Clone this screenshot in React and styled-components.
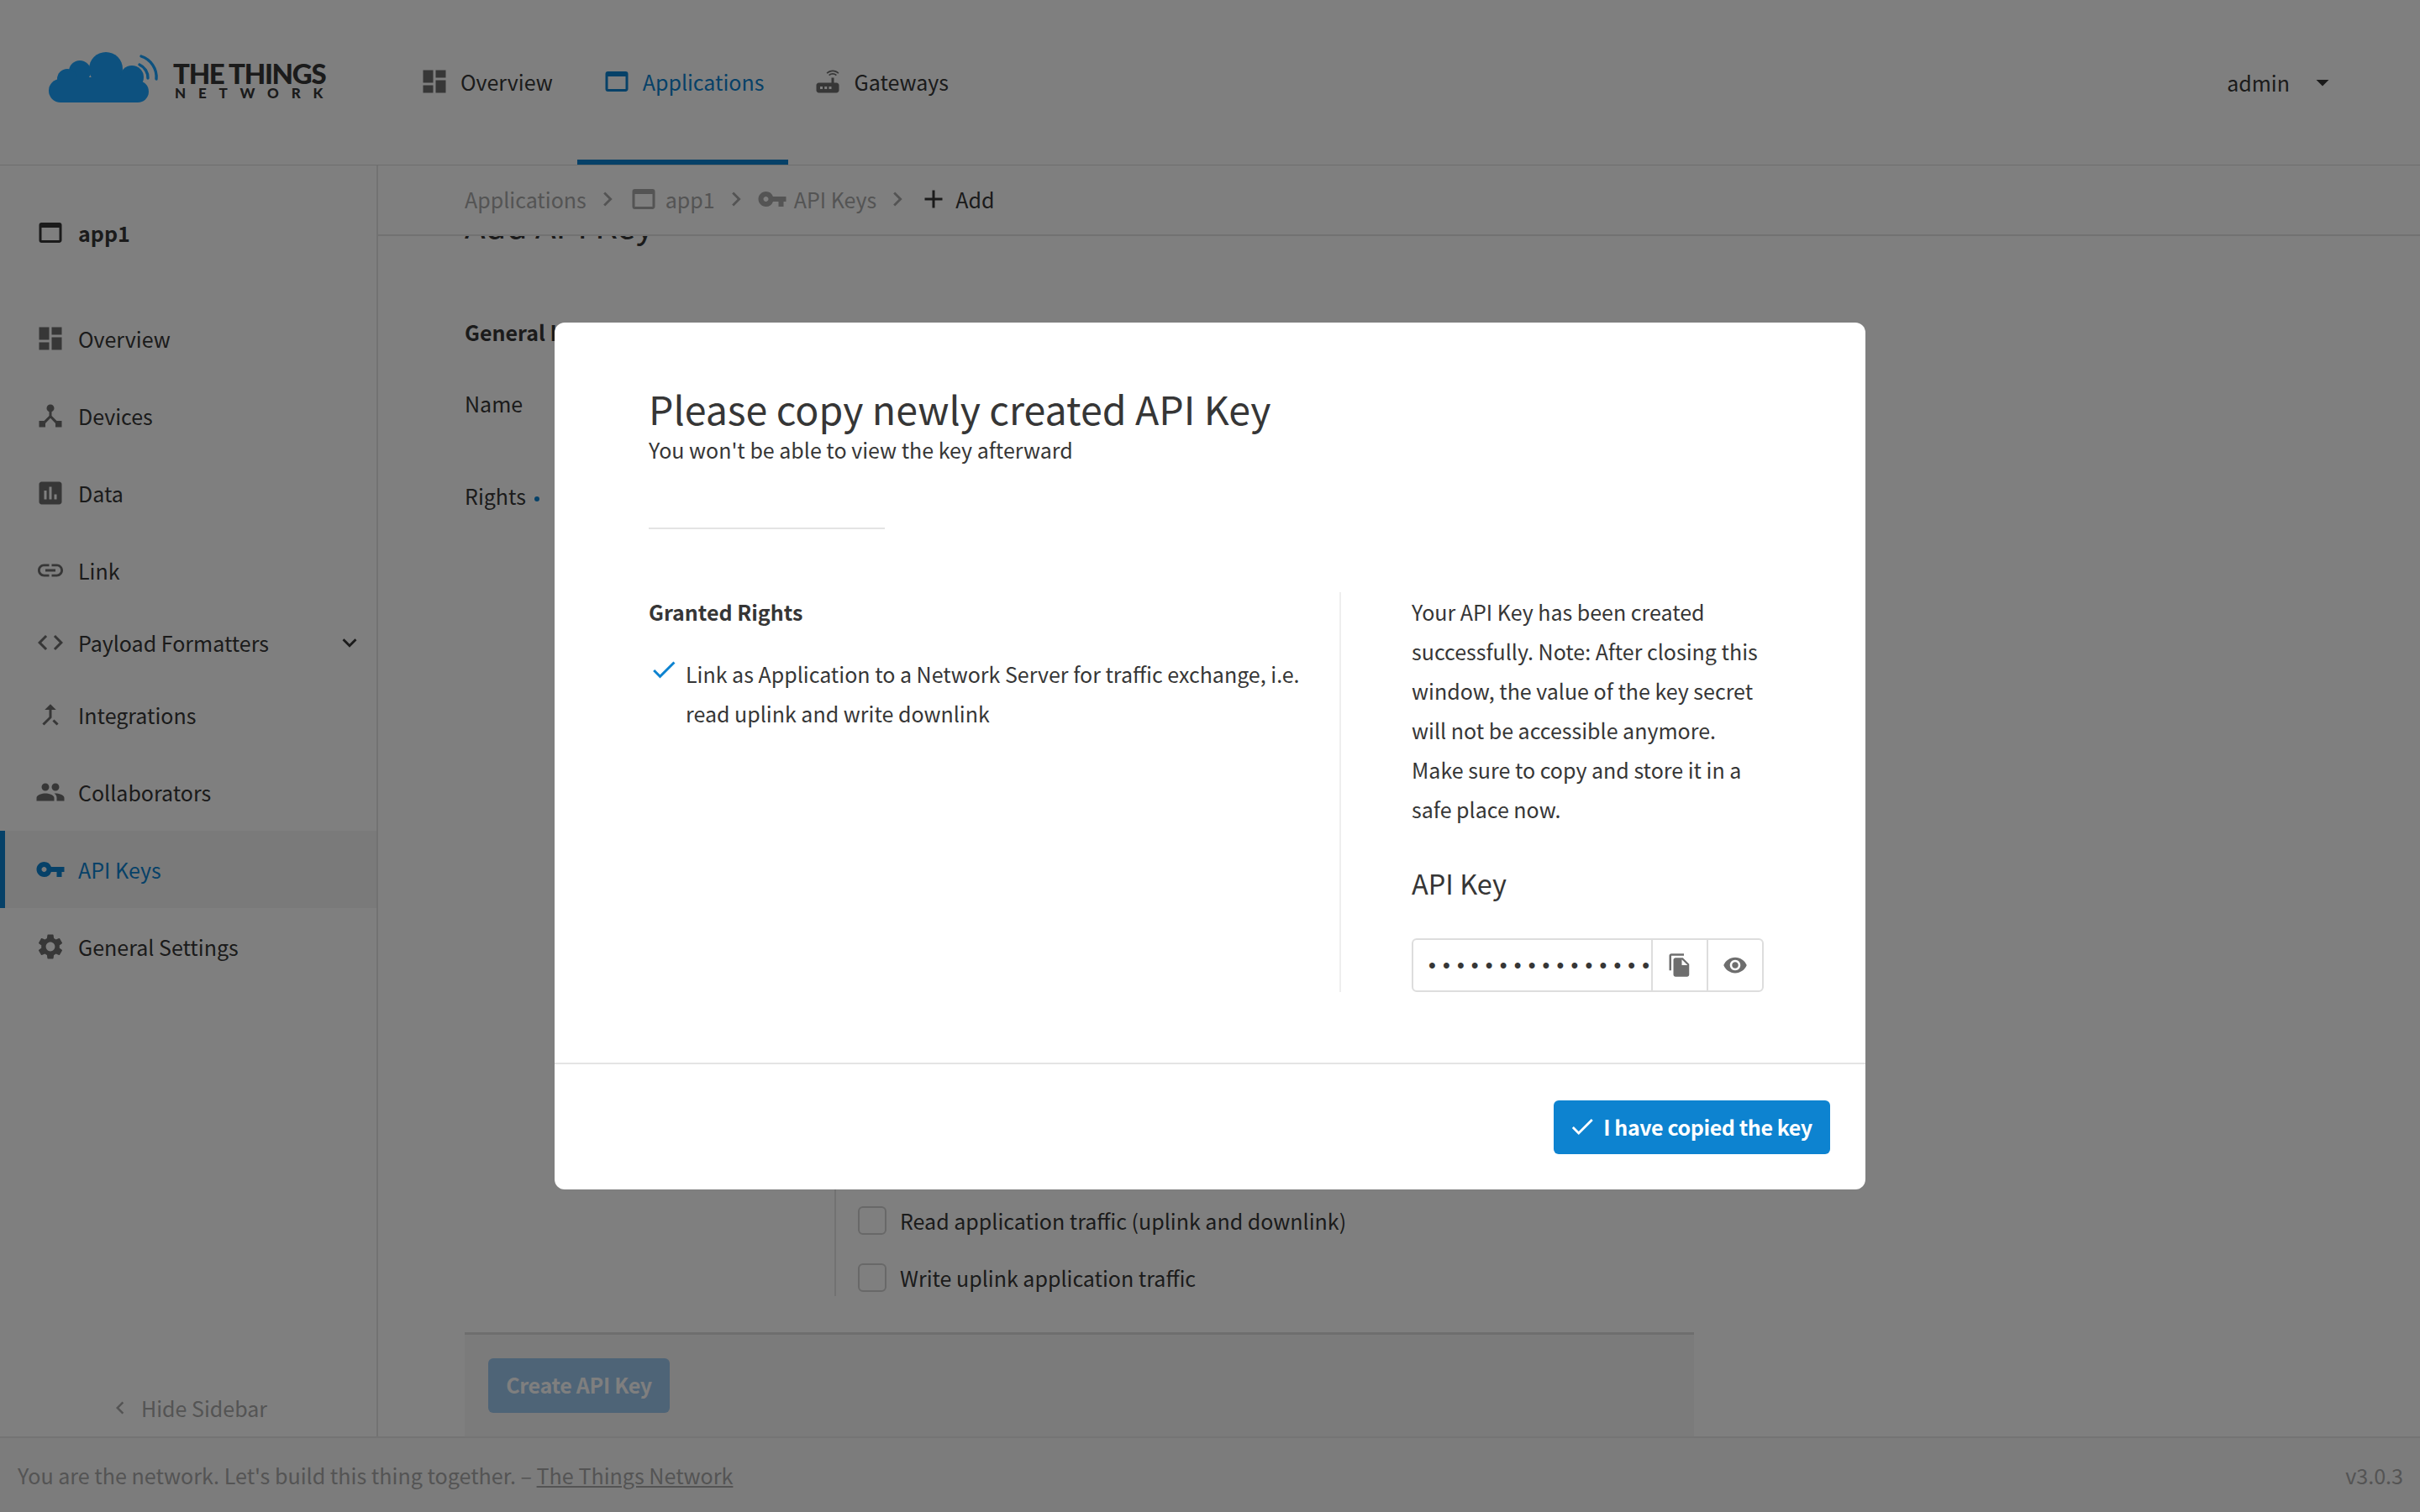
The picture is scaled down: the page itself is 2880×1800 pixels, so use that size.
import React from 'react';
import styled, { createGlobalStyle } from 'styled-components';
import {
  MdDashboard,
  MdDeviceHub,
  MdAssessment,
  MdLink,
  MdCode,
  MdCallMerge,
  MdGroup,
  MdVpnKey,
  MdSettings,
  MdCheck,
  MdWebAsset,
  MdRouter,
  MdFileCopy,
  MdVisibility,
  MdKeyboardArrowDown,
  MdKeyboardArrowLeft,
  MdKeyboardArrowRight,
  MdAdd,
  MdArrowDropDown,
} from 'react-icons/md';

const FONT = '"Noto Sans CJK SC", "Noto Sans", sans-serif';

const GlobalStyle = createGlobalStyle`
  html, body {
    margin: 0;
    padding: 0;
    height: 100%;
    background: #fff;
    font-family: ${FONT};
    font-size: 25px;
    color: #363636;
  }
`;

const sideItems = [
  { icon: MdDashboard, label: 'Overview' },
  { icon: MdDeviceHub, label: 'Devices' },
  { icon: MdAssessment, label: 'Data' },
  { icon: MdLink, label: 'Link' },
  { icon: MdCode, label: 'Payload Formatters', short: true, caret: true },
  { icon: MdCallMerge, label: 'Integrations' },
  { icon: MdGroup, label: 'Collaborators' },
  { icon: MdVpnKey, label: 'API Keys', active: true },
  { icon: MdSettings, label: 'General Settings' },
];

const Logo = () => (
  <LogoBox>
    <LogoMark width="132" height="62" viewBox="0 0 132 62" fill="#1aa3ff">
      <circle cx="68" cy="20" r="20" />
      <circle cx="37" cy="23" r="13" />
      <circle cx="22" cy="32" r="12" />
      <circle cx="14" cy="46" r="14" />
      <circle cx="99" cy="30" r="14" />
      <circle cx="106" cy="47" r="13" />
      <rect x="14" y="30" width="92" height="30" />
      <path
        d="M110 5 A26 26 0 0 1 128 32 M108 15 A17 17 0 0 1 118 31"
        fill="none"
        stroke="#1aa3ff"
        strokeWidth="3.4"
        strokeLinecap="round"
      />
    </LogoMark>
    <LogoText>
      <LogoTop>THE THINGS</LogoTop>
      <LogoBottom>NETWORK</LogoBottom>
    </LogoText>
  </LogoBox>
);

const App = () => {
  return (
    <Page>
      <GlobalStyle />
      <Header>
        <Logo />
        <Nav>
          <Tab>
            <MdDashboard size={36} />
            Overview
          </Tab>
          <Tab $active>
            <MdWebAsset size={36} />
            Applications
          </Tab>
          <Tab>
            <MdRouter size={36} />
            Gateways
          </Tab>
        </Nav>
        <UserMenu>
          admin
          <MdArrowDropDown size={36} />
        </UserMenu>
      </Header>

      <Body>
        <Sidebar>
          <SideTitle>
            <MdWebAsset size={36} />
            app1
          </SideTitle>
          {sideItems.map(item => (
            <SideItem key={item.label} $active={item.active} $short={item.short}>
              <item.icon size={36} />
              {item.label}
              {item.caret && (
                <SideCaret>
                  <MdKeyboardArrowDown size={34} />
                </SideCaret>
              )}
            </SideItem>
          ))}
          <HideSidebar>
            <MdKeyboardArrowLeft size={30} />
            Hide Sidebar
          </HideSidebar>
        </Sidebar>

        <Main>
          <Breadcrumbs>
            <Crumb>Applications</Crumb>
            <CrumbSep>
              <MdKeyboardArrowRight size={34} />
            </CrumbSep>
            <Crumb>
              <MdWebAsset size={36} />
              app1
            </Crumb>
            <CrumbSep>
              <MdKeyboardArrowRight size={34} />
            </CrumbSep>
            <Crumb>
              <MdVpnKey size={36} />
              API Keys
            </Crumb>
            <CrumbSep>
              <MdKeyboardArrowRight size={34} />
            </CrumbSep>
            <Crumb $current>
              <MdAdd size={36} />
              Add
            </Crumb>
          </Breadcrumbs>
          <Content>
            <PageTitle>Add API Key</PageTitle>
            <SectionTitle>General Information</SectionTitle>
            <FieldLabel>Name</FieldLabel>
            <RightsRow>
              <FieldLabel as="div" $flush>
                Rights
                <RequiredDot />
              </FieldLabel>
              <RightsList>
                <RightRow>
                  <CheckBox />
                  Read application traffic (uplink and downlink)
                </RightRow>
                <RightRow>
                  <CheckBox />
                  Write uplink application traffic
                </RightRow>
              </RightsList>
            </RightsRow>
            <SubmitBar>
              <SubmitButton>Create API Key</SubmitButton>
            </SubmitBar>
          </Content>
        </Main>
      </Body>

      <Footer>
        <span>
          You are the network. Let's build this thing together. – <FooterLink>The Things Network</FooterLink>
        </span>
        <span>v3.0.3</span>
      </Footer>

      <Overlay>
        <Modal>
          <ModalBody>
            <ModalTitle>Please copy newly created API Key</ModalTitle>
            <ModalSubtitle>You won't be able to view the key afterward</ModalSubtitle>
            <ModalRule />
            <Columns>
              <LeftColumn>
                <GrantedTitle>Granted Rights</GrantedTitle>
                <GrantedRow>
                  <GrantedCheck>
                    <MdCheck size={36} />
                  </GrantedCheck>
                  <span>Link as Application to a Network Server for traffic exchange, i.e. read uplink and write downlink</span>
                </GrantedRow>
              </LeftColumn>
              <RightColumn>
                <Note>
                  Your API Key has been created successfully. Note: After closing this window, the value of the key secret
                  will not be accessible anymore.
                  <br />
                  Make sure to copy and store it in a safe place now.
                </Note>
                <KeyTitle>API Key</KeyTitle>
                <KeyField>
                  <KeyInput type="password" readOnly value="NNSXS.AAAAAAAAAAAAAAAAAAAAAAAA" />
                  <KeyButton>
                    <MdFileCopy size={30} />
                  </KeyButton>
                  <KeyButton>
                    <MdVisibility size={30} />
                  </KeyButton>
                </KeyField>
              </RightColumn>
            </Columns>
          </ModalBody>
          <ModalFooter>
            <PrimaryButton>
              <MdCheck size={34} />
              I have copied the key
            </PrimaryButton>
          </ModalFooter>
        </Modal>
      </Overlay>
    </Page>
  );
};

export default App;

const Page = styled.div`
  display: flex;
  flex-direction: column;
  width: 2880px;
  height: 1800px;
  overflow: hidden;
`;

const Header = styled.header`
  display: flex;
  align-items: stretch;
  flex: 0 0 197px;
  box-sizing: border-box;
  padding: 0 98px 0 58px;
  border-bottom: 1px solid #ddd;
`;

const LogoBox = styled.div`
  display: flex;
  align-items: center;
  flex: 0 0 330px;
  min-width: 0;
  margin-right: 82px;
  gap: 16px;
`;

const LogoMark = styled.svg`
  flex: 0 0 132px;
  margin-bottom: 10px;
`;

const LogoText = styled.div`
  display: flex;
  flex-direction: column;
  margin-bottom: 4px;
  font-family: Lato, sans-serif;
  font-weight: 900;
  color: #363636;
`;

const LogoTop = styled.div`
  font-size: 33px;
  line-height: 30px;
  letter-spacing: -1.3px;
  white-space: nowrap;
`;

const LogoBottom = styled.div`
  font-size: 17px;
  line-height: 18px;
  letter-spacing: 14.8px;
  margin-left: 2px;
  white-space: nowrap;
`;

const Nav = styled.nav`
  display: flex;
  flex: 1;
`;

const Tab = styled.a`
  display: flex;
  align-items: center;
  gap: 13px;
  padding: 4px 29px 0;
  border-bottom: 6px solid ${p => (p.$active ? '#0d83d0' : 'transparent')};
  color: ${p => (p.$active ? '#0d83d0' : '#363636')};
  svg {
    color: ${p => (p.$active ? '#0d83d0' : '#6e6e6e')};
  }
`;

const UserMenu = styled.div`
  display: flex;
  align-items: center;
  gap: 21px;
`;

const Body = styled.div`
  display: flex;
  flex: 1;
  min-height: 0;
`;

const Sidebar = styled.aside`
  display: flex;
  flex-direction: column;
  flex: 0 0 450px;
  box-sizing: border-box;
  border-right: 2px solid #e4e4e4;
`;

const SideTitle = styled.div`
  display: flex;
  align-items: center;
  gap: 15px;
  height: 160px;
  padding-left: 42px;
  font-weight: 700;
  svg {
    color: #363636;
  }
`;

const SideItem = styled.a`
  display: flex;
  align-items: center;
  gap: 15px;
  flex: 0 0 ${p => (p.$short ? 80 : 92)}px;
  box-sizing: border-box;
  padding-left: ${p => (p.$active ? 36 : 42)}px;
  border-left: ${p => (p.$active ? '6px solid #0d83d0' : 'none')};
  background: ${p => (p.$active ? '#f5f5f5' : 'transparent')};
  color: ${p => (p.$active ? '#0d83d0' : '#363636')};
  svg {
    color: ${p => (p.$active ? '#0d83d0' : '#6e6e6e')};
  }
`;

const SideCaret = styled.span`
  display: flex;
  margin-left: auto;
  margin-right: 15px;
  svg {
    color: #363636;
  }
`;

const HideSidebar = styled.div`
  display: flex;
  align-items: center;
  justify-content: center;
  gap: 10px;
  margin-top: auto;
  padding: 0 2px 16px 0;
  line-height: 36px;
  color: #a8a8a8;
`;

const Main = styled.main`
  display: flex;
  flex-direction: column;
  flex: 1;
  min-width: 0;
`;

const Breadcrumbs = styled.div`
  display: flex;
  align-items: center;
  flex: 0 0 84px;
  box-sizing: border-box;
  padding: 0 0 2px 103px;
  border-bottom: 2px solid #e4e4e4;
`;

const Crumb = styled.span`
  display: flex;
  align-items: center;
  gap: 8px;
  color: ${p => (p.$current ? '#363636' : '#a8a8a8')};
  svg {
    color: ${p => (p.$current ? '#363636' : '#a8a8a8')};
  }
`;

const CrumbSep = styled.span`
  display: flex;
  margin: 0 8px;
  color: #a8a8a8;
`;

const Content = styled.div`
  flex: 1;
  min-height: 0;
  overflow: hidden;
  padding-left: 103px;
`;

const PageTitle = styled.h1`
  margin: -44px 0 0;
  font-size: 40.5px;
  line-height: 60px;
  font-weight: 400;
  color: #363636;
`;

const SectionTitle = styled.h2`
  margin: 80px 0 0;
  font-size: 25px;
  line-height: 36px;
  font-weight: 700;
`;

const FieldLabel = styled.div`
  margin-top: ${p => (p.$flush ? 0 : 49)}px;
  line-height: 36px;
`;

const RequiredDot = styled.span`
  display: inline-block;
  width: 6px;
  height: 6px;
  margin-left: 10px;
  border-radius: 50%;
  vertical-align: middle;
  background: #0d83d0;
`;

const RightsRow = styled.div`
  display: grid;
  grid-template-columns: 440px 1fr;
  width: 1463px;
  margin-top: 74px;
`;

const RightsList = styled.div`
  display: flex;
  flex-direction: column;
  gap: 32px;
  padding: 863px 0 4px 26px;
  border-left: 2px solid #e4e4e4;
`;

const RightRow = styled.label`
  display: flex;
  align-items: center;
  gap: 16px;
  line-height: 36px;
`;

const CheckBox = styled.span`
  display: block;
  box-sizing: border-box;
  width: 34px;
  height: 34px;
  border: 2px solid #d0d0d0;
  border-radius: 6px;
  background: #fff;
`;

const SubmitBar = styled.div`
  box-sizing: border-box;
  width: 1463px;
  height: 130px;
  margin-top: 43px;
  padding: 28px;
  background: #f6f6f6;
  border-top: 3px solid #dcdcdc;
`;

const SubmitButton = styled.button`
  width: 216px;
  height: 65px;
  padding: 0 0 3px;
  border: none;
  border-radius: 6px;
  font-family: ${FONT};
  font-size: 25px;
  font-weight: 700;
  letter-spacing: -0.3px;
  color: #fff;
  background: #9dc8ee;
`;

const Footer = styled.footer`
  display: flex;
  align-items: center;
  justify-content: space-between;
  flex: 0 0 90px;
  box-sizing: border-box;
  padding: 0 20px 0 21px;
  background: #f9f9f9;
  border-top: 2px solid #e8e8e8;
  font-size: 25.1px;
  color: #a8a8a8;
`;

const FooterLink = styled.a`
  text-decoration: underline;
`;

const Overlay = styled.div`
  position: fixed;
  inset: 0;
  display: flex;
  align-items: center;
  justify-content: center;
  background: rgba(0, 0, 0, 0.5);
`;

const Modal = styled.div`
  width: 1560px;
  height: 1032px;
  display: flex;
  flex-direction: column;
  background: #fff;
  border-radius: 12px;
`;

const ModalBody = styled.div`
  flex: 1;
  padding: 72px 121px 0 112px;
`;

const ModalTitle = styled.h2`
  margin: 0;
  font-size: 46.5px;
  line-height: 60px;
  font-weight: 400;
`;

const ModalSubtitle = styled.div`
  margin-top: 1px;
  line-height: 36px;
`;

const ModalRule = styled.div`
  width: 281px;
  height: 2px;
  margin: 75px 0 75px;
  background: #e4e4e4;
`;

const Columns = styled.div`
  display: grid;
  grid-template-columns: 824px minmax(0, 1fr);
`;

const LeftColumn = styled.div`
  padding-right: 30px;
  border-right: 2px solid #eee;
`;

const GrantedTitle = styled.div`
  font-weight: 700;
  line-height: 47px;
`;

const GrantedRow = styled.div`
  display: flex;
  align-items: flex-start;
  margin-top: 27px;
  line-height: 47px;
`;

const GrantedCheck = styled.span`
  display: flex;
  flex: 0 0 44px;
  color: #0d83d0;
`;

const RightColumn = styled.div`
  padding-left: 84px;
`;

const Note = styled.div`
  line-height: 47px;
`;

const KeyTitle = styled.div`
  margin-top: 40px;
  font-size: 32.5px;
  line-height: 48px;
`;

const KeyField = styled.div`
  display: flex;
  box-sizing: border-box;
  height: 64px;
  margin-top: 42px;
  border: 2px solid #ddd;
  border-radius: 6px;
`;

const KeyInput = styled.input`
  flex: 1;
  min-width: 0;
  padding: 0 0 0 18px;
  border: none;
  outline: none;
  background: transparent;
  font-family: "Liberation Sans", sans-serif;
  font-size: 25px;
  color: #363636;
  letter-spacing: 8.2px;
`;

const KeyButton = styled.button`
  display: flex;
  align-items: center;
  justify-content: center;
  flex: 0 0 66px;
  padding: 0;
  border: none;
  border-left: 2px solid #ddd;
  background: transparent;
  color: #6e6e6e;
`;

const ModalFooter = styled.div`
  display: flex;
  justify-content: flex-end;
  padding: 43px 42px 42px;
  border-top: 2px solid #e4e4e4;
`;

const PrimaryButton = styled.button`
  display: flex;
  align-items: center;
  justify-content: center;
  gap: 8px;
  width: 329px;
  height: 64px;
  padding: 0 4px 2px 0;
  border: none;
  border-radius: 6px;
  font-family: ${FONT};
  font-size: 25px;
  font-weight: 700;
  letter-spacing: -0.4px;
  color: #fff;
  background: #0d83d0;
`;
